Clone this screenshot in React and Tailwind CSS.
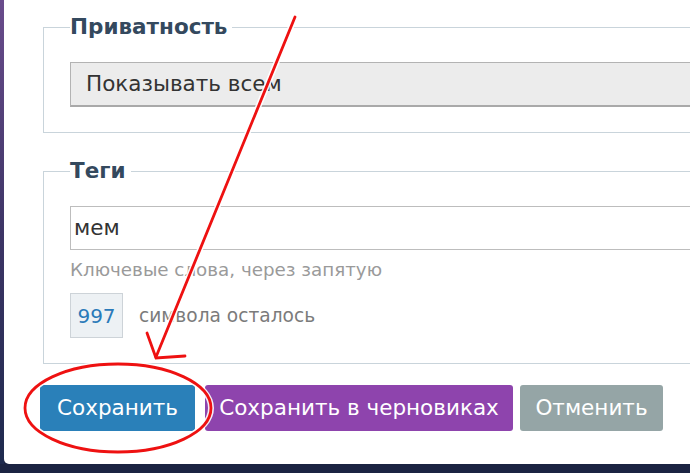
import React from "react";

const font = { fontFamily: '"DejaVu Sans", "Noto Sans", sans-serif' };

const Annotation = () => (
  <svg className="absolute inset-0 pointer-events-none" width="690" height="473" viewBox="0 0 690 473">
    {/* white halo */}
    <g stroke="#fff" strokeWidth="6" fill="none" strokeLinecap="round" opacity="0.9">
      <line x1="295" y1="17" x2="156" y2="357" />
      <polyline points="147,333 156,358 185,356" />
      <ellipse cx="118" cy="408" rx="93" ry="44" />
    </g>
    <g stroke="#ee1111" strokeWidth="2.8" fill="none" strokeLinecap="round">
      <line x1="295" y1="17" x2="156" y2="357" />
      <polyline points="147,333 156,358 185,356" />
      <ellipse cx="118" cy="408" rx="93" ry="44" />
    </g>
  </svg>
);

export default function App() {
  return (
    <div className="relative w-[690px] h-[473px] overflow-hidden bg-[#1b2342]" style={font}>
      <div className="flex h-[464px]">
        <div className="w-[4px] bg-gradient-to-b from-[#6a4c8c] via-[#3d3566] to-[#1e2a4e]" />
        <div className="flex-1 bg-white rounded-bl-[5px] overflow-hidden pl-[39px] pt-[17px]">
          <div className="w-[720px]">
            {/* PRIVACY */}
            <fieldset className="border border-[#c9d4db] pl-[26px] pb-[25px]">
              <legend className="text-[21.5px] leading-[20px] font-bold text-[#34495e] pr-[5px]">Приватность</legend>
              <div className="mt-[25px] h-[45px] bg-[#ececec] border border-[#b3b3b3] border-b-2 border-b-[#a9a9a9] flex items-center pl-[15px] text-[21.5px] text-[#333]">
                Показывать всем
              </div>
            </fieldset>

            {/* TAGS */}
            <fieldset className="mt-[28px] border border-[#c9d4db] pl-[26px] pb-[25px]">
              <legend className="text-[21.5px] leading-[20px] font-bold text-[#34495e] pr-[5px]">Теги</legend>
              <div className="mt-[25px] h-[44px] border border-[#bdbdbd] flex items-center pl-[3px] text-[21.5px] text-[#333]">
                мем
              </div>
              <div className="mt-[10px] text-[18.3px] leading-[20px] text-[#9a9a9a]">Ключевые слова, через запятую</div>
              <div className="mt-[13px] flex items-center">
                <div className="w-[53px] h-[45px] bg-[#edf1f4] border border-[#cdd3d8] flex items-center justify-center text-[20px] text-[#2a7ab9]">
                  997
                </div>
                <span className="ml-[16px] text-[18.6px] text-[#7b7b7b]">символа осталось</span>
              </div>
            </fieldset>
          </div>

          {/* ACTIONS */}
          <div className="mt-[21px] -ml-[3px] flex items-center">
            <button className="w-[155px] h-[46px] rounded-[3px] bg-[#2a80b9] text-white text-[21.5px]">Сохранить</button>
            <button className="ml-[10px] w-[308px] h-[46px] rounded-[3px] bg-[#8e44ad] text-white text-[21.5px] whitespace-nowrap">Сохранить в черновиках</button>
            <button className="ml-[7px] w-[143px] h-[46px] rounded-[3px] bg-[#95a5a6] text-white text-[21.5px]">Отменить</button>
          </div>
        </div>
      </div>
      <Annotation />
    </div>
  );
}
